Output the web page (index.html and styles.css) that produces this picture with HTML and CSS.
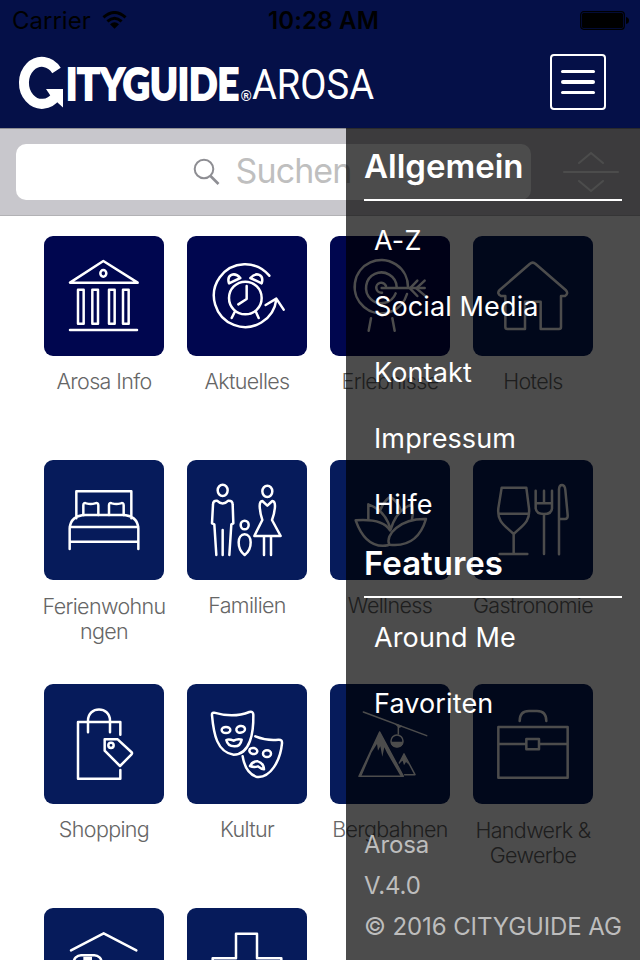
FILE: index.html
```html
<!DOCTYPE html>
<html lang="de">
<head>
    <meta charset="UTF-8">
    <meta name="viewport" content="width=device-width, initial-scale=1.0">
    <title>CITYGUIDE Arosa</title>
    <link rel="stylesheet" href="styles.css">
</head>
<body>

<header class="header">
    <div class="status-bar">
        <div class="carrier">
            <span>Carrier</span>
            <svg class="wifi" viewBox="0 0 26 18" width="26" height="18">
                <path d="M1.500 6.300Q13-4 24.500 6.300M5.600 10.500Q13 4 20.400 10.500" fill="none" stroke="#000" stroke-width="3"/>
                <path d="M13 18L8.300 13.300Q13 9.500 17.700 13.300Z"/>
            </svg>
        </div>
        <span class="clock">10:28 AM</span>
        <svg class="battery" viewBox="0 0 50 20" width="50" height="20">
            <rect x="0.700" y="0.700" width="43.600" height="17.600" rx="3" fill="none" stroke="#000" stroke-width="1.200"/>
            <rect x="2" y="2" width="41" height="15" rx="1.500"/>
            <path d="M46 6Q49 6.500 49 9.500T46 13Z"/>
        </svg>
    </div>
    <div class="title-bar">
        <svg class="logo" viewBox="0 0 380 64" width="380" height="64">
            <path d="M56.500 20.500A18 21 0 1 0 56 46" fill="none" stroke="#fff" stroke-width="10"/>
            <path d="M46 39H63V57.500L58 53L50 45Z" fill="#fff"/>
            <text class="logo-bold" x="66" y="50" textLength="173" lengthAdjust="spacingAndGlyphs">ITYGUIDE</text>
            <text class="logo-reg" x="241" y="50.500">®</text>
            <text class="logo-light" x="252" y="49" textLength="122" lengthAdjust="spacingAndGlyphs">AROSA</text>
        </svg>
        <button class="menu-button" aria-label="Menu">
            <span></span>
            <span></span>
            <span></span>
        </button>
    </div>
</header>

<main class="content">
    <div class="search-bar">
        <div class="search-field">
            <svg class="search-icon" viewBox="0 0 28 28" width="28" height="28">
                <circle cx="11" cy="11" r="9.300"/>
                <path d="M17.500 18L25.500 26" stroke-width="2.600"/>
            </svg>
            <span>Suchen</span>
        </div>
        <svg class="sort-icon" viewBox="0 0 56 44" width="56" height="44">
            <path d="M16 13L28 3L40 13M1 22H55M16 31L28 41L40 31"/>
        </svg>
    </div>

    <div class="grid">
        <div class="tile">
            <svg class="icon dark" viewBox="0 0 360 360">
                <path d="M178 75L78 140H281Z"/>
                <ellipse cx="178" cy="112" rx="9" ry="10"/>
                <path d="M102 161H119V263H102ZM145 161H162V263H145ZM195 161H212V263H195ZM237 161H254V263H237ZM78 282H279"/>
            </svg>
            <span class="label">Arosa Info</span>
        </div>
        <div class="tile">
            <svg class="icon dark" viewBox="0 0 360 360">
                <path d="M247 119A94 94 0 1 0 268 190M236 207L268 188L290 221"/>
                <circle cx="175" cy="186" r="49"/>
                <path d="M179 150V189L154 205M143 228L134 246M207 228L215 246"/>
                <path d="M126 142C118 116 142 106 160 126ZM224 142C232 116 208 106 190 126Z"/>
            </svg>
            <span class="label">Aktuelles</span>
        </div>
        <div class="tile">
            <svg class="icon dark" viewBox="0 0 360 360">
                <path d="M234 153A80 80 0 1 0 231 174M200 153A46 46 0 1 0 197 172M168 150A15 15 0 1 0 156 170M155 156H284"/>
                <path d="M262 134L240 157L262 180M284 134L259 157L284 178M123 247L116 284M187 247L194 284"/>
            </svg>
            <span class="label">Erlebnisse</span>
        </div>
        <div class="tile">
            <svg class="icon" viewBox="0 0 360 360">
                <path d="M97 180H84Q70 172 80 162L170 84Q179 76 188 84L278 162Q288 172 276 180H264V273Q264 279 258 279H203V197H156V279H103Q97 279 97 273Z"/>
            </svg>
            <span class="label">Hotels</span>
        </div>

        <div class="tile">
            <svg class="icon" viewBox="0 0 360 360">
                <path d="M97 175V94H262V175M77 267V205Q80 166 125 165H235Q280 166 283 205V267M77 201H283M77 245H283"/>
                <path d="M118 165V136Q118 127 127 130Q140 134 153 130Q163 127 163 136V165M195 165V136Q195 127 204 130Q217 134 230 130Q239 127 239 136V165"/>
            </svg>
            <span class="label two">Ferienwohnu<br>ngen</span>
        </div>
        <div class="tile">
            <svg class="icon" viewBox="0 0 360 360">
                <ellipse cx="107" cy="91" rx="15" ry="17"/>
                <path d="M88 285L82 193L75 190L78 134Q78 121 90 122Q107 139 124 122Q137 121 137 134L139 190L133 193L127 285M107 210V285"/>
                <ellipse cx="173" cy="195" rx="12" ry="13"/>
                <path d="M173 223C150 223 148 265 173 285C198 265 196 223 173 223Z"/>
                <ellipse cx="241" cy="94" rx="15" ry="17"/>
                <path d="M226 123L241 137L256 123Q264 124 264 138Q263 160 255 180L281 228H202L226 180Q219 160 218 138Q218 124 226 123ZM231 228V285M252 228V285"/>
            </svg>
            <span class="label">Familien</span>
        </div>
        <div class="tile">
            <svg class="icon" viewBox="0 0 360 360">
                <path d="M77 181Q158 175 180 211M77 181Q108 268 174 256M288 177C210 175 164 225 178 254Q262 264 288 177Z"/>
                <path d="M115 177V133Q165 150 182 208Q200 150 245 133Q252 150 246 178M151 150Q160 125 180 110Q204 125 212 150"/>
            </svg>
            <span class="label">Wellness</span>
        </div>
        <div class="tile">
            <svg class="icon" viewBox="0 0 360 360">
                <path d="M86 83H160L168 145C172 185 150 195 122 222C94 195 72 185 76 145ZM76 161H168M122 222V282M80 282H163"/>
                <path d="M188 92V145Q190 162 213 162Q236 162 237 145V92M213 92V130M188 130H237M213 162V282M258 283V88Q259 75 267 75Q276 76 277 90L284 165Q285 177 276 177H260"/>
            </svg>
            <span class="label">Gastronomie</span>
        </div>

        <div class="tile">
            <svg class="icon" viewBox="0 0 360 360">
                <path d="M229 152V114H102V284H229V258M132 145V110C132 65 198 65 198 110V145"/>
                <path d="M182 166H221L262 204Q266 208 262 212L228 246L182 200Z"/>
                <circle cx="201" cy="184" r="8"/>
            </svg>
            <span class="label">Shopping</span>
        </div>
        <div class="tile">
            <svg class="icon" viewBox="0 0 360 360">
                <path d="M81 86Q140 103 187 84Q199 81 199 92C200 145 190 212 140 212C90 205 80 150 75 94Q74 85 81 86Z"/>
                <ellipse cx="117" cy="138" rx="13" ry="9"/>
                <ellipse cx="161" cy="136" rx="13" ry="10" transform="rotate(-12 161 136)"/>
                <path d="M118 168Q126 164 140 170Q152 163 164 167Q160 188 142 187Q122 187 118 168Z"/>
                <path d="M205 157Q240 171 274 167Q286 166 285 178C280 230 250 285 207 278Q175 266 167 217"/>
                <ellipse cx="199" cy="201" rx="12" ry="9" transform="rotate(12 199 201)"/>
                <ellipse cx="240" cy="209" rx="12" ry="10"/>
                <path d="M189 246Q197 231 212 232Q230 237 231 256Q222 255 213 247Q200 251 189 246Z"/>
            </svg>
            <span class="label">Kultur</span>
        </div>
        <div class="tile">
            <svg class="icon thin" viewBox="0 0 360 360">
                <path d="M100 84L290 155M149 144L87 277H220ZM222 210L255 272H224M222 210L208 237M205 123V150"/>
                <circle cx="201" cy="171" r="18"/>
                <path class="solid" d="M149 143L87 277H94L125 205L141 180L144 200L151 187L157 218L163 190L171 206L212 277H221ZM222 210L209 236L218 230L222 244L228 234L237 242ZM182 173H220Q219 190 201 190Q183 190 182 173ZM193 119L220 127L207 132Z"/>
            </svg>
            <span class="label">Bergbahnen</span>
        </div>
        <div class="tile">
            <svg class="icon" viewBox="0 0 360 360">
                <path d="M76 129H284V281H76ZM76 180H160M198 180H284M160 165H198V196H160ZM140 111Q140 81 168 81H192Q220 81 220 111"/>
            </svg>
            <span class="label two">Handwerk &amp;<br>Gewerbe</span>
        </div>

        <div class="tile">
            <svg class="icon" viewBox="0 0 360 360">
                <path d="M81 127L179 76L277 127"/>
                <rect x="89" y="142" width="84" height="60" rx="22"/>
                <path class="solid" d="M118 146H144V175H118Z"/>
            </svg>
        </div>
        <div class="tile">
            <svg class="icon" viewBox="0 0 360 360">
                <path d="M77 151H147V77H210V151H283V214H210V284H147V214H77Z"/>
            </svg>
        </div>
    </div>
</main>

<nav class="side-menu">
    <h2>Allgemein</h2>
    <ul>
        <li>A-Z</li>
        <li>Social Media</li>
        <li>Kontakt</li>
        <li>Impressum</li>
        <li>Hilfe</li>
    </ul>
    <h2>Features</h2>
    <ul>
        <li>Around Me</li>
        <li>Favoriten</li>
    </ul>
    <div class="about">
        <p>Arosa</p>
        <p>V.4.0</p>
        <p>© 2016 CITYGUIDE AG</p>
    </div>
</nav>

</body>
</html>
```
FILE: styles.css
```css
* {
    box-sizing: border-box;
}
body {
    position: relative;
    margin: 0;
    width: 640px;
    height: 960px;
    overflow: hidden;
    background-color: #fff;
    font-family: Inter, "Liberation Sans", sans-serif;
}
.header {
    height: 128px;
    background-color: #051048;
}
.status-bar {
    display: grid;
    grid-template-columns: 1fr auto 1fr;
    align-items: center;
    height: 40px;
    padding: 0 10px 0 12px;
    font-size: 24px;
    color: #000;
}
.carrier {
    display: flex;
    align-items: center;
    gap: 11px;
}
.wifi {
    width: 25px;
    margin-top: -1px;
}
.clock {
    padding-left: 5px;
    font-weight: 600;
    letter-spacing: 0.2px;
}
.battery {
    justify-self: end;
    margin-top: 2px;
}
.title-bar {
    display: flex;
    justify-content: space-between;
    align-items: center;
    height: 84px;
    padding-right: 34px;
}
.logo {
    overflow: visible;
    fill: #fff;
}
.logo-bold {
    font-family: Lato, sans-serif;
    font-size: 43px;
    font-weight: 900;
    stroke: #fff;
    stroke-width: 2px;
}
.logo-reg {
    font-family: "Liberation Sans", sans-serif;
    font-size: 14px;
    font-weight: bold;
}
.logo-light {
    font-family: Roboto, sans-serif;
    font-size: 43px;
    font-weight: 400;
}
.menu-button {
    display: flex;
    flex-direction: column;
    justify-content: center;
    align-items: center;
    gap: 7px;
    width: 56px;
    height: 56px;
    padding: 0;
    border: 2px solid #fff;
    border-radius: 4px;
    background: none;
}
.menu-button span {
    width: 34px;
    height: 3.5px;
    border-radius: 2px;
    background-color: #fff;
}
.content {
    height: 832px;
    overflow: hidden;
}

/* search */
.search-bar {
    display: flex;
    align-items: center;
    gap: 32px;
    height: 88px;
    padding: 0 16px;
    background-color: #c8c7cc;
    border-top: 1px solid #8e8e93;
    border-bottom: 1px solid #b2b2b5;
}
.search-field {
    display: flex;
    justify-content: center;
    align-items: center;
    gap: 15px;
    width: 515px;
    height: 56px;
    padding-right: 3px;
    border-radius: 10px;
    background-color: #fff;
    font-size: 34px;
    letter-spacing: -0.9px;
    color: #bfbfbf;
}
.search-field span {
    margin-top: -4px;
}
.search-icon {
    fill: none;
    stroke: #8e8e93;
    stroke-width: 2;
}
.sort-icon {
    fill: none;
    stroke: #fff;
    stroke-width: 2;
    stroke-linecap: round;
}

/* category tiles */
.grid {
    display: grid;
    grid-template-columns: repeat(4, 120px);
    grid-auto-rows: 204px;
    gap: 20px 23px;
    padding: 20px 44px 0;
}
.tile {
    display: flex;
    flex-direction: column;
    align-items: center;
}
.icon {
    flex: none;
    width: 120px;
    height: 120px;
    border-radius: 9px;
    background-color: #061b5b;
    fill: none;
    stroke: #fff;
    stroke-width: 7.5;
    stroke-linecap: round;
    stroke-linejoin: round;
}
.icon.dark {
    background-color: #00064f;
}
.icon.thin {
    stroke-width: 4.5;
}
.icon .solid {
    fill: #fff;
    stroke: none;
}
.label {
    margin-top: 13px;
    font-size: 21.5px;
    font-weight: 300;
    line-height: 25px;
    letter-spacing: -0.65px;
    text-align: center;
    white-space: nowrap;
    color: #666;
}
.label.two {
    margin-top: 14px;
}

/* menu drawer lies over the page */
.side-menu {
    position: absolute;
    top: 128px;
    right: 0;
    bottom: 0;
    width: 294px;
    padding: 10px 18px 0;
    background-color: rgba(0, 0, 0, 0.7);
    color: #fff;
}
.side-menu h2 {
    height: 63px;
    margin: 0;
    padding-top: 7px;
    border-bottom: 2px solid #fff;
    font-size: 33px;
    font-weight: 600;
    line-height: 42px;
}
.side-menu ul {
    margin: 0;
    padding: 7px 0 0 10px;
    list-style: none;
}
.side-menu li {
    height: 66px;
    font-size: 27px;
    line-height: 66px;
    letter-spacing: 0.12px;
}
.side-menu ul + h2 {
    margin-top: -3px;
}
.about {
    margin-top: 87px;
    font-size: 24px;
    line-height: 41px;
    letter-spacing: -0.1px;
    white-space: nowrap;
    color: #bdbdbd;
}
.about p {
    margin: 0;
}
```
